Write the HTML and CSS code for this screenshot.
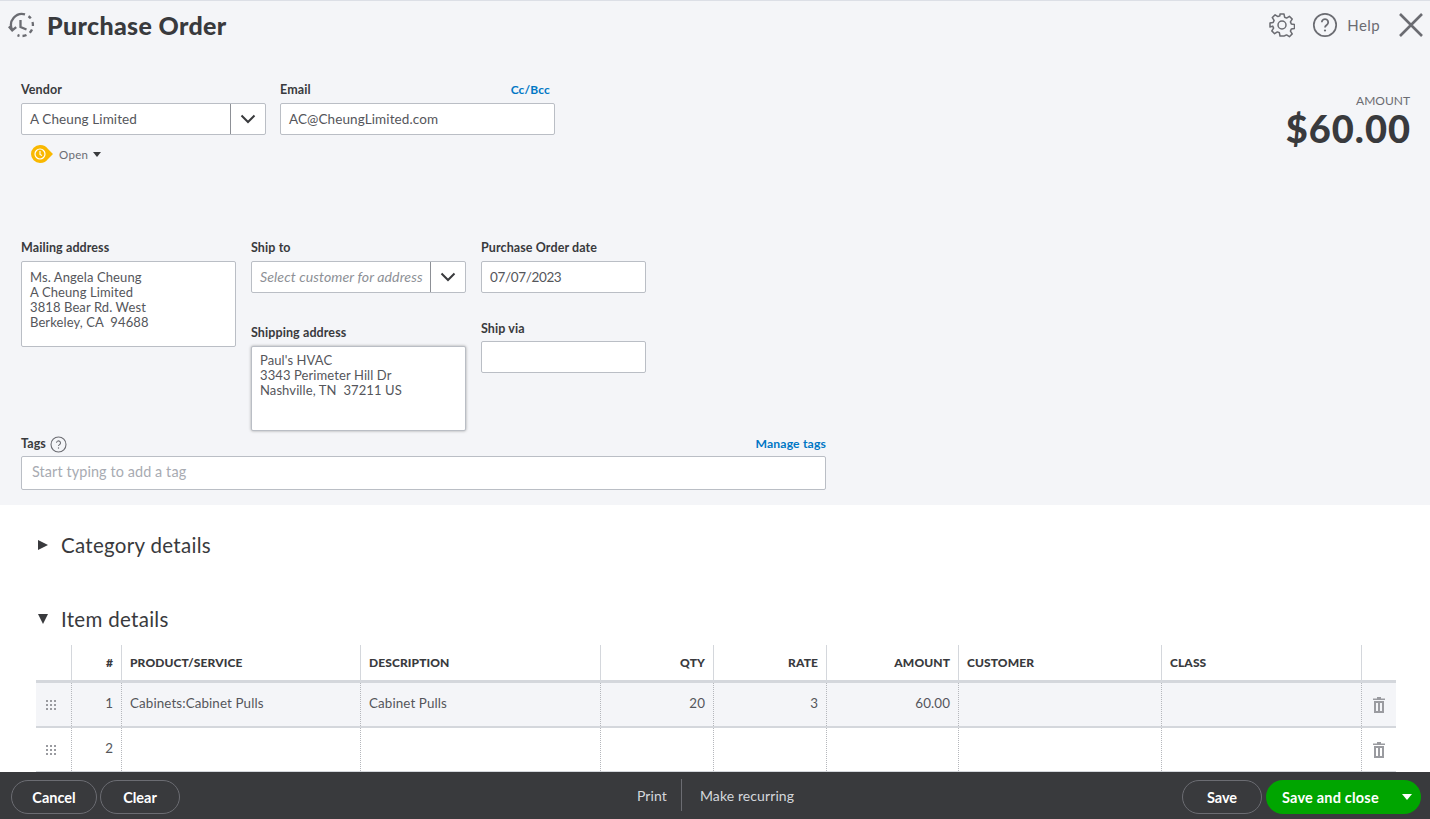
FILE: index.html
```html
<!DOCTYPE html>
<html lang="en">
<head>
<meta charset="utf-8">
<title>Purchase Order</title>
<link rel="stylesheet" href="styles.css">
</head>
<body>
<div class="page">
  <main class="main">
    <section class="top">
      <header class="head">
        <svg class="logo" width="28" height="28" viewBox="0 0 28 28" fill="none" stroke="#6b6c72" stroke-width="2.3">
          <path d="M4 18.500A11 11 0 0 1 17 3.400"/>
          <path d="M20.500 5.200a11 11 0 0 1 2.300 2.200M24.500 11a11 11 0 0 1 .4 4M24 18.500a11 11 0 0 1-2.300 3.300M18.500 24a11 11 0 0 1-4 1M11.500 24.800a11 11 0 0 1-2-.7"/>
          <path d="M.8 15.500l3.400 4 4-3.400M12.500 9v7l6 2.500"/>
        </svg>
        <h1 class="title">Purchase Order</h1>
        <div class="tools">
          <svg width="26" height="26" viewBox="0 0 26 26" fill="none" stroke="#6b6c72" stroke-width="1.5" stroke-linejoin="round">
            <circle cx="13" cy="13" r="4"/>
            <path d="M11 2h4l.6 3.200 2 .9 2.800-1.800 2.800 2.800-1.800 2.800.9 2 3.200.6v4l-3.200.6-.9 2 1.800 2.800-2.800 2.800-2.800-1.800-2 .9L15 24h-4l-.6-3.200-2-.9-2.800 1.800-2.800-2.800 1.800-2.800-.9-2L1 15v-4l3.200-.6.9-2-1.800-2.800 2.800-2.800 2.800 1.800 2-.9z"/>
          </svg>
          <svg class="help-icon" width="26" height="26" viewBox="0 0 26 26" fill="none" stroke="#6b6c72" stroke-width="1.7">
            <circle cx="13" cy="13" r="11.200"/>
            <path d="M9.800 10.300a3.200 3.200 0 1 1 4.800 2.800c-1 .6-1.600 1.200-1.600 2.400" stroke-width="1.800"/>
            <circle cx="13" cy="18.500" r="1.100" fill="#6b6c72" stroke="none"/>
          </svg>
          <span class="help">Help</span>
          <svg class="close" width="26" height="26" viewBox="0 0 26 26" fill="none" stroke="#6b6c72" stroke-width="2.600"><path d="M2 2l22 22M24 2L2 24"/></svg>
        </div>
      </header>

      <div class="vendor-row">
        <div class="vendor-left">
          <div class="field vendor">
            <label class="label">Vendor</label>
            <div class="combo"><span class="combo-text">A Cheung Limited</span><span class="combo-btn"><svg width="16" height="10" viewBox="0 0 16 10" fill="none" stroke="#393a3d" stroke-width="2"><path d="M1.500 1.500L8 8l6.500-6.500"/></svg></span></div>
            <div class="status">
              <svg width="23" height="18" viewBox="0 0 23 18"><path d="M9 0c4 0 6 1.500 8 4l5 5-5 5c-2 2.500-4 4-8 4A9 9 0 0 1 9 0z" fill="#f9b800"/><circle cx="9" cy="9" r="5" fill="none" stroke="#fff" stroke-width="1.200"/><path d="M9 6v3.500l2 1" fill="none" stroke="#fff" stroke-width="1.100"/></svg>
              <span class="status-text">Open</span><span class="caret-small"></span>
            </div>
          </div>
          <div class="field email">
            <div class="label-row email-row"><label class="label">Email</label><a class="link">Cc/Bcc</a></div>
            <div class="input">AC@CheungLimited.com</div>
          </div>
        </div>
        <div class="total">
          <div class="total-label">AMOUNT</div>
          <div class="total-value">$60.00</div>
        </div>
      </div>

      <div class="address-grid">
        <div class="field addr-mail">
          <label class="label">Mailing address</label>
          <div class="textarea mail-box">Ms. Angela Cheung<br>A Cheung Limited<br>3818 Bear Rd. West<br>Berkeley, CA&nbsp; 94688</div>
        </div>
        <div class="col-ship">
          <div class="field">
            <label class="label">Ship to</label>
            <div class="combo"><span class="combo-text placeholder">Select customer for address</span><span class="combo-btn"><svg width="16" height="10" viewBox="0 0 16 10" fill="none" stroke="#393a3d" stroke-width="2"><path d="M1.500 1.500L8 8l6.500-6.500"/></svg></span></div>
          </div>
          <div class="field ship-addr">
            <label class="label">Shipping address</label>
            <div class="textarea ship-box">Paul's HVAC<br>3343 Perimeter Hill Dr<br>Nashville, TN&nbsp; 37211 US</div>
          </div>
        </div>
        <div class="col-date">
          <div class="field">
            <label class="label">Purchase Order date</label>
            <div class="input date">07/07/2023</div>
          </div>
          <div class="field ship-via">
            <label class="label">Ship via</label>
            <div class="input"></div>
          </div>
        </div>
      </div>

      <div class="tags">
        <div class="label-row tags-row">
          <label class="label tag-label">Tags
            <svg width="17" height="17" viewBox="0 0 17 17" fill="none" stroke="#6b6c72" stroke-width="1.100"><circle cx="8.500" cy="8.500" r="7.500"/><path d="M6.500 6.800a2 2 0 1 1 3 1.800c-.6.400-1 .7-1 1.500"/><circle cx="8.500" cy="12" r=".7" fill="#6b6c72" stroke="none"/></svg>
          </label>
          <a class="link">Manage tags</a>
        </div>
        <div class="input tag-input">Start typing to add a tag</div>
      </div>
    </section>

    <section class="details">
      <h2 class="section-head cat"><span class="tri-right"></span>Category details</h2>
      <h2 class="section-head item"><span class="tri-down"></span>Item details</h2>
      <div class="table">
        <div class="row row-head">
          <div class="c c-drag"></div><div class="c c-num r">#</div><div class="c c-prod">PRODUCT/SERVICE</div><div class="c c-desc">DESCRIPTION</div><div class="c c-qty r">QTY</div><div class="c c-rate r">RATE</div><div class="c c-amt r">AMOUNT</div><div class="c c-cust">CUSTOMER</div><div class="c c-class">CLASS</div><div class="c c-del"></div>
        </div>
        <div class="row row-body row-shaded">
          <div class="c c-drag"><span class="grip"></span></div><div class="c c-num r">1</div><div class="c c-prod">Cabinets:Cabinet Pulls</div><div class="c c-desc">Cabinet Pulls</div><div class="c c-qty r">20</div><div class="c c-rate r">3</div><div class="c c-amt r">60.00</div><div class="c c-cust"></div><div class="c c-class"></div>
          <div class="c c-del"><svg width="12" height="16" viewBox="0 0 12 16" fill="#9a9ba0"><path d="M4 0h4v1.500h4V3H0V1.500h4zM1 4h10v12H1zM3 6v8h2V6zm4 0v8h2V6z" fill-rule="evenodd"/></svg></div>
        </div>
        <div class="row row-body">
          <div class="c c-drag"><span class="grip"></span></div><div class="c c-num r">2</div><div class="c c-prod"></div><div class="c c-desc"></div><div class="c c-qty r"></div><div class="c c-rate r"></div><div class="c c-amt r"></div><div class="c c-cust"></div><div class="c c-class"></div>
          <div class="c c-del"><svg width="12" height="16" viewBox="0 0 12 16" fill="#9a9ba0"><path d="M4 0h4v1.500h4V3H0V1.500h4zM1 4h10v12H1zM3 6v8h2V6zm4 0v8h2V6z" fill-rule="evenodd"/></svg></div>
        </div>
      </div>
    </section>
  </main>

  <footer class="footer">
    <div class="foot-left">
      <button class="btn">Cancel</button>
      <button class="btn btn-clear">Clear</button>
    </div>
    <div class="foot-center">
      <span class="foot-link">Print</span>
      <span class="foot-sep"></span>
      <span class="foot-link">Make recurring</span>
    </div>
    <div class="foot-right">
      <button class="btn btn-save">Save</button>
      <div class="btn-primary"><span>Save and close</span><span class="caret-white"></span></div>
    </div>
  </footer>
</div>
</body>
</html>
```
FILE: styles.css
```css
* { box-sizing: border-box; }
html, body { margin: 0; height: 100%; overflow: hidden; }
body { font-family: "Lato", "Open Sans", sans-serif; color: #393a3d; font-size: 13px; background: #fff; }
.page { height: 819px; display: flex; flex-direction: column; }
.main { flex: 1; min-height: 0; overflow: hidden; }

.top { background: #f4f5f8; border-top: 1px solid #dcdfe6; height: 505px; padding: 0 20px 0 21px; }
.head { display: flex; align-items: center; height: 49px; margin-left: -13px; }
.logo { margin-right: 11px; margin-top: -1px; }
.title { margin: -2px 0 0; font-size: 25px; font-weight: 900; color: #393a3d; letter-spacing: .35px; }
.tools { display: flex; align-items: center; margin: -2px -14px 0 auto; }
.help-icon { margin-left: 17px; }
.help { font-size: 15px; color: #6b6c72; margin-left: 9px; letter-spacing: .4px; }
.close { margin-left: 18px; }

.field { display: flex; flex-direction: column; }
.label { font-size: 12.500px; font-weight: 700; color: #393a3d; line-height: 16px; height: 16px; margin-bottom: 5px; display: block; letter-spacing: .1px; }
.label-row { display: flex; justify-content: space-between; align-items: baseline; }
.email-row { padding-right: 5px; }
.link { color: #0077c5; font-size: 12px; font-weight: 700; letter-spacing: .15px; }

.vendor-row { display: flex; justify-content: space-between; padding-top: 32px; height: 189px; }
.vendor-left { display: flex; gap: 14px; align-items: flex-start; }
.vendor { width: 245px; }
.email { width: 275px; }
.combo { display: flex; height: 32px; background: #fff; border: 1px solid #babec5; border-radius: 2px; }
.combo-text { flex: 1; min-width: 0; padding-left: 8px; line-height: 30px; font-size: 13.500px; white-space: nowrap; color: #55565b; letter-spacing: .1px; }
.combo-btn { width: 35px; border-left: 1px solid #8d9096; display: flex; align-items: center; justify-content: center; }
.placeholder { font-style: italic; color: #8d9096; font-size: 14.100px; }
.input { height: 32px; background: #fff; border: 1px solid #babec5; border-radius: 2px; padding-left: 8px; line-height: 30px; font-size: 13.500px; color: #55565b; letter-spacing: .1px; }
.date { letter-spacing: -.35px; }
.status { display: flex; align-items: center; margin: 10px 0 0 10px; height: 18px; }
.status-text { font-size: 11.500px; color: #6b6c72; margin-left: 5px; letter-spacing: .3px; }
.caret-small { margin-left: 5px; border-left: 4px solid transparent; border-right: 4px solid transparent; border-top: 5px solid #393a3d; }
.total { text-align: right; padding-top: 11px; margin-right: -1px; }
.total-label { font-size: 12px; color: #6b6c72; line-height: 16px; margin-right: 1px; }
.total-value { font-size: 38px; font-weight: 900; color: #393a3d; line-height: 38px; letter-spacing: 1px; }

.address-grid { display: flex; height: 196px; padding-top: 1px; }
.addr-mail { width: 215px; margin-right: 15px; }
.col-ship { width: 215px; margin-right: 15px; }
.col-date { width: 165px; }
.textarea { background: #fff; border: 1px solid #babec5; border-radius: 2px; padding: 8px; font-size: 13px; line-height: 15px; color: #55565b; letter-spacing: .1px; }
.mail-box { height: 86px; }
.ship-addr { margin-top: 32px; }
.ship-box { height: 85px; padding-top: 6px; box-shadow: 0 0 3px rgba(0,0,0,.35); }
.ship-via { margin-top: 28px; }
.ship-via .label { margin-bottom: 4px; }

.tags { width: 805px; }
.tags-row { height: 18px; margin-bottom: 3px; align-items: center; }
.tag-label { margin: 0; display: flex; align-items: center; gap: 4px; height: 18px; }
.tag-input { height: 34px; line-height: 30px; color: #a8abb2; padding-left: 10px; font-size: 14.400px; }
.tags-row .link { font-size: 12.200px; margin-top: -2px; }

.details { padding: 0 34px 0 36px; }
.section-head { margin: 0; font-weight: 400; font-size: 20.500px; line-height: 26px; color: #393a3d; display: flex; align-items: center; letter-spacing: .3px; }
.cat { padding-top: 27px; height: 53px; margin-bottom: 48px; }
.item { height: 26px; margin-bottom: 13px; }
.tri-right { margin: 0 13px 0 2px; border-top: 5px solid transparent; border-bottom: 5px solid transparent; border-left: 10px solid #393a3d; }
.tri-down { margin: 0 13px 0 2px; border-left: 5px solid transparent; border-right: 5px solid transparent; border-top: 10px solid #393a3d; }

.row { display: grid; grid-template-columns: 35px 50px 239px 240px 113px 113px 132px 203px 200px 35px; }
.row-head { height: 38px; border-bottom: 3px solid #d4d7dc; font-size: 12px; font-weight: 900; letter-spacing: .1px; }
.row-head .c { border-left: 1px solid #d4d7dc; line-height: 35px; }
.row-head .c-drag { border-left: 0; }
.row-body { height: 45px; border-bottom: 2px solid #d4d7dc; font-size: 13.400px; color: #55565b; letter-spacing: .1px; }
.row-body .c { border-left: 1px dotted #b5b7bc; line-height: 41px; }
.row-body .c-drag { border-left: 0; }
.row-shaded { background: #f4f5f8; }
.c { padding: 0 8px; white-space: nowrap; min-width: 0; }
.r { text-align: right; }
.c-drag { display: flex; align-items: center; justify-content: center; padding: 0 5px 0 0; }
.grip { width: 12px; height: 12px; background-image: radial-gradient(circle, #9a9ba0 .9px, transparent 1px); background-size: 4px 4px; }
.c-del { display: flex; align-items: center; justify-content: center; padding: 0; }
.row-body .c-del svg { display: block; }

.footer { flex: none; height: 47px; background: #393a3d; display: flex; align-items: center; justify-content: space-between; position: relative; padding: 3px 9px 0 11px; }
.foot-left, .foot-right { display: flex; align-items: center; }
.btn { height: 34px; width: 86px; border-radius: 17px; background: transparent; border: 1px solid #6b6c72; color: #fff; font: 700 14.500px "Lato", sans-serif; padding: 0; }
.btn-clear { width: 80px; margin-left: 3px; }
.btn-save { width: 80px; margin-right: 4px; }
.foot-center { position: absolute; left: 637px; top: 7px; height: 32px; display: flex; align-items: center; color: #d4d7dc; font-size: 14px; letter-spacing: .1px; }
.foot-sep { width: 1px; height: 32px; background: #6b6c72; margin: 0 18px 0 14px; }
.btn-primary { width: 155px; height: 34px; border-radius: 17px; background: #00a500; color: #fff; font-weight: 700; font-size: 14.500px; letter-spacing: .2px; display: flex; align-items: center; justify-content: space-between; padding: 0 9px 0 16px; }
.caret-white { border-left: 5px solid transparent; border-right: 5px solid transparent; border-top: 6px solid #fff; }
```
